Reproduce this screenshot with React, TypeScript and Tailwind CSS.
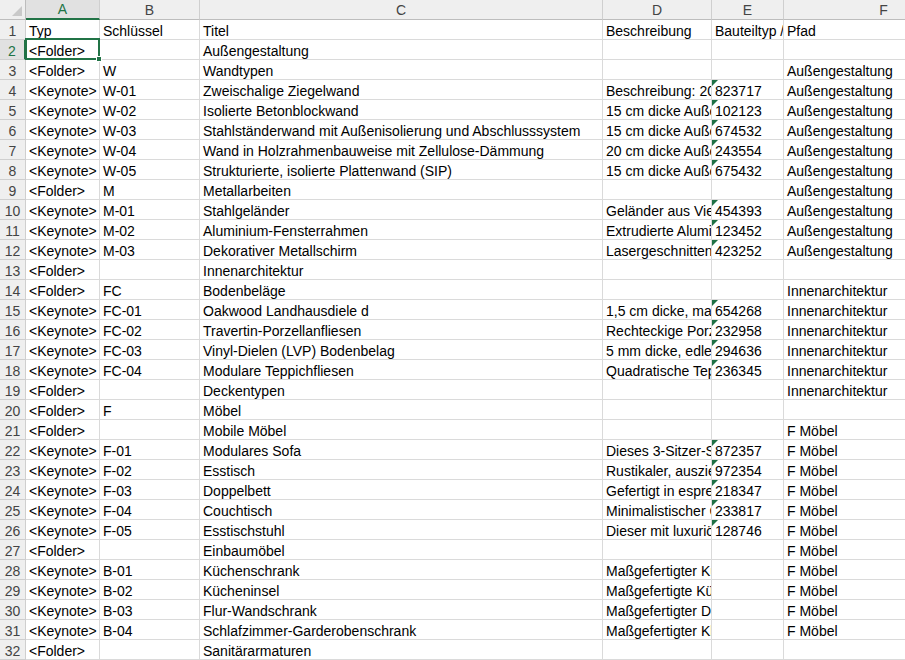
import React from "react";

type Row = [string, string, string, string, string, string];

const rows: Row[] = [
  ["Typ", "Schlüssel", "Titel", "Beschreibung", "Bauteiltyp / ID", "Pfad"],
  ["<Folder>", "", "Außengestaltung", "", "", ""],
  ["<Folder>", "W", "Wandtypen", "", "", "Außengestaltung"],
  ["<Keynote>", "W-01", "Zweischalige Ziegelwand", "Beschreibung: 20 cm zweischaliges Mauerwerk", "823717", "Außengestaltung"],
  ["<Keynote>", "W-02", "Isolierte Betonblockwand", "15 cm dicke Außenwand aus Betonblöcken", "102123", "Außengestaltung"],
  ["<Keynote>", "W-03", "Stahlständerwand mit Außenisolierung und Abschlusssystem", "15 cm dicke Außenwand mit Stahlständern", "674532", "Außengestaltung"],
  ["<Keynote>", "W-04", "Wand in Holzrahmenbauweise mit Zellulose-Dämmung", "20 cm dicke Außenwand in Holzrahmenbauweise", "243554", "Außengestaltung"],
  ["<Keynote>", "W-05", "Strukturierte, isolierte Plattenwand (SIP)", "15 cm dicke Außenwand aus SIP-Paneelen", "675432", "Außengestaltung"],
  ["<Folder>", "M", "Metallarbeiten", "", "", "Außengestaltung"],
  ["<Keynote>", "M-01", "Stahlgeländer", "Geländer aus Vierkantstahl", "454393", "Außengestaltung"],
  ["<Keynote>", "M-02", "Aluminium-Fensterrahmen", "Extrudierte Aluminiumrahmen", "123452", "Außengestaltung"],
  ["<Keynote>", "M-03", "Dekorativer Metallschirm", "Lasergeschnittene Metallpaneele", "423252", "Außengestaltung"],
  ["<Folder>", "", "Innenarchitektur", "", "", ""],
  ["<Folder>", "FC", "Bodenbeläge", "", "", "Innenarchitektur"],
  ["<Keynote>", "FC-01", "Oakwood Landhausdiele d", "1,5 cm dicke, massive Eichendielen", "654268", "Innenarchitektur"],
  ["<Keynote>", "FC-02", "Travertin-Porzellanfliesen", "Rechteckige Porzellanfliesen", "232958", "Innenarchitektur"],
  ["<Keynote>", "FC-03", "Vinyl-Dielen (LVP) Bodenbelag", "5 mm dicke, edle Vinyldielen", "294636", "Innenarchitektur"],
  ["<Keynote>", "FC-04", "Modulare Teppichfliesen", "Quadratische Teppichfliesen", "236345", "Innenarchitektur"],
  ["<Folder>", "", "Deckentypen", "", "", "Innenarchitektur"],
  ["<Folder>", "F", "Möbel", "", "", ""],
  ["<Folder>", "", "Mobile Möbel", "", "", "F Möbel"],
  ["<Keynote>", "F-01", "Modulares Sofa", "Dieses 3-Sitzer-Sofa", "872357", "F Möbel"],
  ["<Keynote>", "F-02", "Esstisch", "Rustikaler, ausziehbarer Esstisch", "972354", "F Möbel"],
  ["<Keynote>", "F-03", "Doppelbett", "Gefertigt in espressofarbenem Holz", "218347", "F Möbel"],
  ["<Keynote>", "F-04", "Couchtisch", "Minimalistischer Couchtisch", "233817", "F Möbel"],
  ["<Keynote>", "F-05", "Esstischstuhl", "Dieser mit luxuriösem Stoff", "128746", "F Möbel"],
  ["<Folder>", "", "Einbaumöbel", "", "", "F Möbel"],
  ["<Keynote>", "B-01", "Küchenschrank", "Maßgefertigter Küchenschrank", "", "F Möbel"],
  ["<Keynote>", "B-02", "Kücheninsel", "Maßgefertigte Kücheninsel", "", "F Möbel"],
  ["<Keynote>", "B-03", "Flur-Wandschrank", "Maßgefertigter Dielenschrank", "", "F Möbel"],
  ["<Keynote>", "B-04", "Schlafzimmer-Garderobenschrank", "Maßgefertigter Kleiderschrank", "", "F Möbel"],
  ["<Folder>", "", "Sanitärarmaturen", "", "", ""],
];

const widths = ["w-[74px]", "w-[100px]", "w-[403px]", "w-[109px]", "w-[72px]", "w-[200px]"];
const letters = ["A", "B", "C", "D", "E", "F"];

function Cell({ text, w, flag }: { text: string; w: string; flag?: boolean }) {
  return (
    <div className={`relative ${w} shrink-0 h-full border-r border-b border-[#dadada] overflow-hidden whitespace-nowrap pl-[3px] pt-[2px] leading-[18px]`}>
      {flag && (
        <span className="absolute left-0 top-0 w-0 h-0 border-t-[6px] border-r-[6px] border-t-[#1e7145] border-r-transparent" />
      )}
      {text}
    </div>
  );
}

export default function App() {
  return (
    <div className="relative w-[905px] h-[660px] overflow-hidden bg-white text-[14px] text-black font-['Liberation_Sans',Arial,sans-serif]">
      {/* column headers */}
      <div className="flex h-[20px]">
        <div className="relative w-[26px] shrink-0 h-full bg-[#efefef] border-r border-b border-[#bdbdbd]">
          <span className="absolute right-[3px] bottom-[3px] w-0 h-0 border-b-[10px] border-l-[10px] border-b-[#c9c9c9] border-l-transparent" />
        </div>
        {letters.map((l, i) =>
          i === 0 ? (
            <div
              key={l}
              className={`${widths[i]} shrink-0 h-full bg-[#e1e1e1] border-r border-[#cfcfcf] border-b-2 border-b-[#217346] text-[#217346] text-center pt-[1px] leading-[17px]`}
            >
              {l}
            </div>
          ) : (
            <div
              key={l}
              className={`${widths[i]} shrink-0 h-full bg-[#efefef] border-r border-b border-[#cfcfcf] border-b-[#bdbdbd] text-[#444] text-center pt-[1px] leading-[18px]`}
            >
              {l}
            </div>
          )
        )}
      </div>

      {rows.map((r, ri) => {
        const n = ri + 1;
        const sel = n === 2;
        return (
          <div key={n} className="flex h-[20px]">
            <div
              className={`w-[26px] shrink-0 h-full border-b text-center pt-[2px] leading-[18px] ${
                sel
                  ? "bg-[#e1e1e1] text-[#217346] border-r-2 border-r-[#217346] border-b-[#cfcfcf]"
                  : "bg-[#efefef] text-[#444] border-r border-[#cfcfcf]"
              }`}
            >
              {n}
            </div>
            {r.map((c, ci) => (
              <Cell key={ci} text={c} w={widths[ci]} flag={ci === 4 && /^\d+$/.test(c)} />
            ))}
          </div>
        );
      })}

      {/* active cell A2 */}
      <div className="absolute left-[25px] top-[38px] w-[75px] h-[22px] border-2 border-[#217346] pointer-events-none" />
      <div className="absolute left-[96px] top-[56px] w-[6px] h-[6px] bg-[#217346] border border-white" />
    </div>
  );
}
